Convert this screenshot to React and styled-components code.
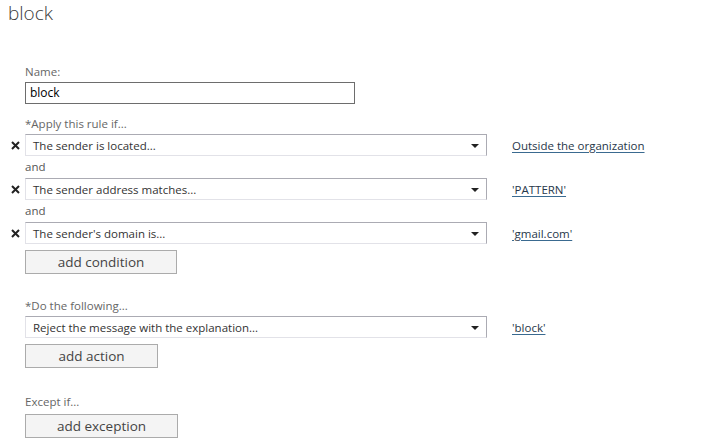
import styled, { createGlobalStyle } from "styled-components";

const Global = createGlobalStyle`
  html, body {
    margin: 0;
    padding: 0;
    background: #fff;
  }
  body {
    font-family: "Open Sans", "Noto Sans", "Liberation Sans", sans-serif;
    color: #333;
  }
`;

const Page = styled.div`
  width: 728px;
  height: 446px;
  overflow: hidden;
  box-sizing: border-box;
`;

const Title = styled.h1`
  margin: 0;
  padding: 0 0 0 8px;
  height: 30px;
  font-size: 19px;
  line-height: 26px;
  font-weight: 300;
  color: #3a3a3a;
`;

const Form = styled.div`
  padding: 34px 0 0 25px;
  display: flex;
  flex-direction: column;
`;

const Label = styled.div`
  font-size: 11.5px;
  line-height: 16px;
  height: 16px;
  color: #666;
  margin-top: ${(p) => p.$gap || 0}px;
  margin-bottom: 2px;
`;

const TextInput = styled.div`
  width: 330px;
  height: 22px;
  box-sizing: border-box;
  border: 1px solid #6d6d6d;
  font-size: 12px;
  line-height: 20px;
  padding-left: 4px;
  color: #000;
`;

const Row = styled.div`
  display: flex;
  align-items: center;
  height: 22px;
  margin-left: ${(p) => (p.$removable ? -16 : 0)}px;
`;

const Remove = styled.span`
  width: 16px;
  display: flex;
  justify-content: flex-start;
  padding-left: 2px;
  box-sizing: border-box;
  color: #222;
`;

const Select = styled.div`
  width: 462px;
  height: 22px;
  box-sizing: border-box;
  border-style: solid;
  border-width: 1px;
  border-color: #ababb3 #ababb3 #e2e2e8 #e2e2e8;
  display: flex;
  align-items: center;
  justify-content: space-between;
  padding: 0 7px 0 7px;
  font-size: 11.5px;
  color: #333;
`;

const Caret = styled.span`
  width: 0;
  height: 0;
  border-left: 4px solid transparent;
  border-right: 4px solid transparent;
  border-top: 4px solid #222;
  margin-top: 1px;
`;

const Link = styled.a`
  margin-left: 25px;
  font-size: 11.5px;
  color: #27374a;
  text-decoration: underline;
  text-decoration-color: #3a6a90;
  text-underline-offset: 2px;
  cursor: pointer;
`;

const And = styled.div`
  height: 22px;
  line-height: 22px;
  font-size: 11.5px;
  color: #555;
`;

const Button = styled.button`
  width: ${(p) => p.$w}px;
  height: 24px;
  margin-top: ${(p) => p.$top || 6}px;
  box-sizing: border-box;
  background: #f4f4f4;
  border: 1px solid #ababab;
  font-family: inherit;
  font-size: 13.5px;
  color: #444;
  padding: 0;
  line-height: 20px;
`;

function X() {
  return (
    <svg width="9" height="9" viewBox="0 0 9 9">
      <path d="M1 1 L8 8 M8 1 L1 8" stroke="#222" strokeWidth="2" />
    </svg>
  );
}

function Condition({ text, value }) {
  return (
    <Row $removable>
      <Remove>
        <X />
      </Remove>
      <Select>
        <span>{text}</span>
        <Caret />
      </Select>
      <Link>{value}</Link>
    </Row>
  );
}

export default function App() {
  return (
    <Page>
      <Global />
      <Title>block</Title>
      <Form>
        <Label>Name:</Label>
        <TextInput>block</TextInput>

        <Label $gap={12}>*Apply this rule if...</Label>
        <Condition text="The sender is located..." value="Outside the organization" />
        <And>and</And>
        <Condition text="The sender address matches..." value="'PATTERN'" />
        <And>and</And>
        <Condition text="The sender's domain is..." value="'gmail.com'" />
        <Button $w={152}>add condition</Button>

        <Label $gap={24}>*Do the following...</Label>
        <Row>
          <Select>
            <span>Reject the message with the explanation...</span>
            <Caret />
          </Select>
          <Link>'block'</Link>
        </Row>
        <Button $w={133}>add action</Button>

        <Label $gap={26}>Except if...</Label>
        <Button $w={153} $top={2}>add exception</Button>
      </Form>
    </Page>
  );
}
